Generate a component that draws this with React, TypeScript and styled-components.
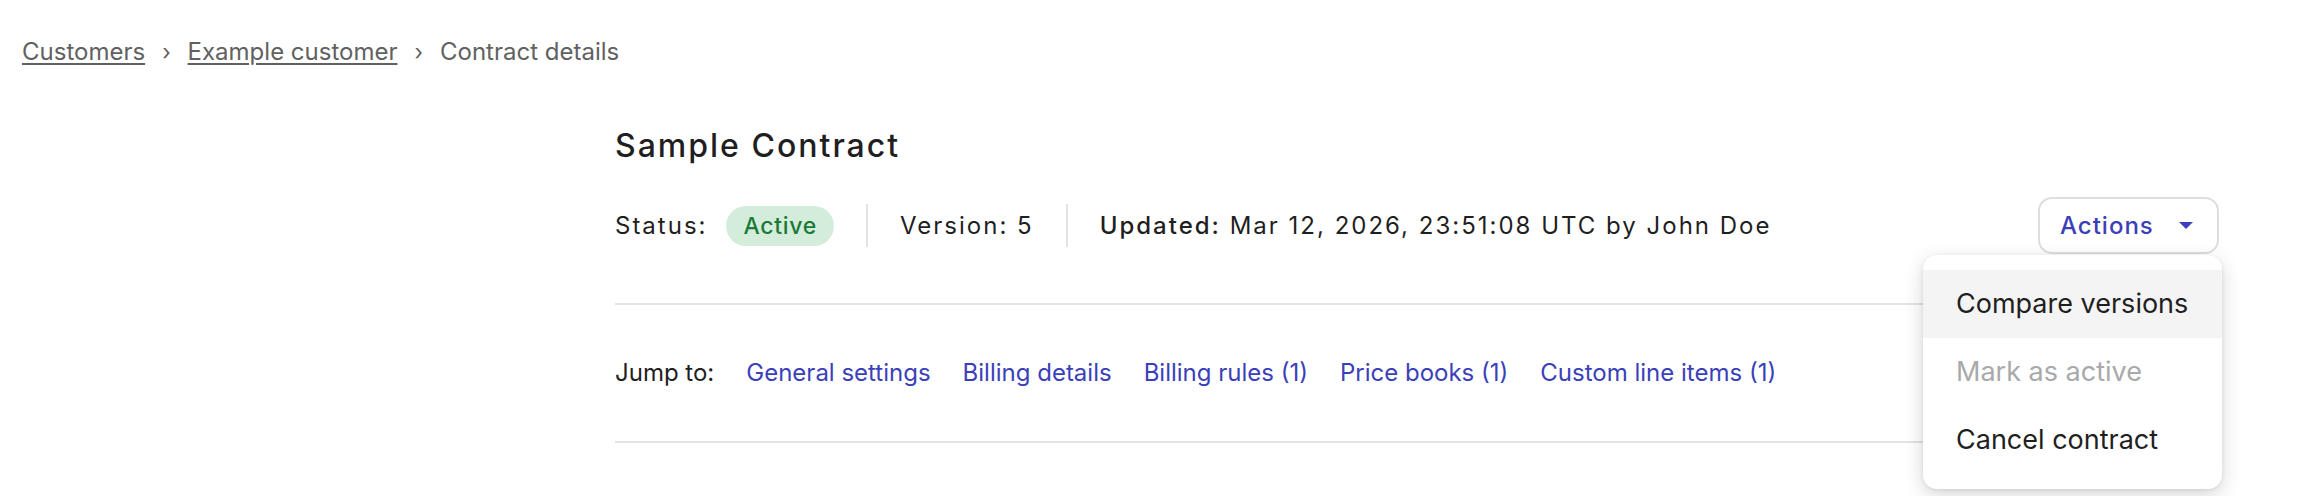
import React from 'react';
import styled, {createGlobalStyle} from 'styled-components';

const GlobalStyle = createGlobalStyle`
    body {
        margin: 0;
        background: #ffffff;
        font-family: Inter, "Noto Sans", sans-serif;
        color: #1f1f1f;
    }
`;

const Page = styled.div`
    width: 2298px;
    height: 496px;
    overflow: hidden;
    position: relative;
`;

const Breadcrumbs = styled.nav`
    display: flex;
    align-items: center;
    gap: 17px;
    padding: 34px 0 0 22px;
    font-size: 24px;
    line-height: 36px;
    color: #616161;
`;

const Crumb = styled.a`
    color: #616161;
    text-decoration: underline;
    text-underline-offset: 3px;
    text-decoration-thickness: 2px;
`;

const CrumbSep = styled.span`
    font-size: 22px;
    color: #616161;
`;

const Main = styled.main`
    margin-left: 615px;
    width: 1604px;
`;

const Title = styled.h1`
    margin: 56px 0 0;
    font-size: 32px;
    line-height: 40px;
    font-weight: 500;
    letter-spacing: 2px;
    color: #1f1f1f;
`;

const StatusRow = styled.div`
    display: flex;
    align-items: center;
    height: 57px;
    margin-top: 31px;
    font-size: 24px;
    line-height: 36px;
    letter-spacing: 2px;
`;

const Field = styled.div`
    display: flex;
    align-items: center;
    gap: 19px;
`;

const Label = styled.span<{$strong?: boolean}>`
    font-weight: ${p => (p.$strong ? 500 : 400)};
`;

const Badge = styled.span`
    display: inline-flex;
    align-items: center;
    height: 40px;
    padding: 0 17px;
    border-radius: 20px;
    background: #d4eddb;
    color: #1b7a38;
    font-size: 23px;
    font-weight: 500;
    letter-spacing: 0.7px;
`;

const VSep = styled.div`
    width: 2px;
    height: 43px;
    background: #e3e3e3;
    margin: 0 32px;
`;

const Spacer = styled.div`
    flex: 1;
`;

const ActionsWrap = styled.div`
    position: relative;
    letter-spacing: normal;
`;

const ActionsButton = styled.button`
    display: flex;
    align-items: center;
    height: 57px;
    width: 181px;
    box-sizing: border-box;
    padding: 0 24px 0 20px;
    border: 2px solid #dedede;
    border-radius: 14px;
    background: #ffffff;
    color: #3b3fb9;
    font-family: inherit;
    font-size: 24px;
    font-weight: 500;
    letter-spacing: 1px;
    cursor: pointer;
`;

const ButtonText = styled.span`
    flex: 1;
    text-align: left;
`;

const Menu = styled.ul`
    position: absolute;
    top: 58px;
    right: -3px;
    width: 299px;
    margin: 0;
    padding: 15px 0;
    list-style: none;
    background: #ffffff;
    border-radius: 14px;
    box-shadow: 0 6px 20px rgba(0, 0, 0, 0.16), 0 1px 4px rgba(0, 0, 0, 0.08);
    z-index: 10;
`;

const MenuItem = styled.li<{$active?: boolean; $disabled?: boolean}>`
    display: flex;
    align-items: center;
    height: 68px;
    padding-left: 33px;
    font-size: 27px;
    color: ${p => (p.$disabled ? '#a9a9a9' : '#1f1f1f')};
    background: ${p => (p.$active ? '#f4f4f4' : 'transparent')};
    white-space: nowrap;
`;

const Divider = styled.hr`
    margin: 0;
    border: none;
    height: 2px;
    background: #e3e3e3;
`;

const StatusDivider = styled(Divider)`
    margin-top: 49px;
`;

const JumpRow = styled.div`
    display: flex;
    align-items: center;
    gap: 32px;
    padding: 50px 0;
    font-size: 24px;
    line-height: 36px;
`;

const JumpLabel = styled.span`
    color: #1f1f1f;
`;

const JumpLink = styled.a`
    color: #3b3fb9;
    text-decoration: none;
`;

const jumpLinks = [
    'General settings',
    'Billing details',
    'Billing rules (1)',
    'Price books (1)',
    'Custom line items (1)'
];

const Caret = () => (
    <svg width="14" height="8" viewBox="0 0 14 8">
        <path d="M0 0 L14 0 L7 7 Z" fill="#3b3fb9" />
    </svg>
);

export default function App() {
    return (
        <Page>
            <GlobalStyle />
            <Breadcrumbs>
                <Crumb>Customers</Crumb>
                <CrumbSep>›</CrumbSep>
                <Crumb>Example customer</Crumb>
                <CrumbSep>›</CrumbSep>
                <span>Contract details</span>
            </Breadcrumbs>
            <Main>
                <Title>Sample Contract</Title>
                <StatusRow>
                    <Field>
                        <Label>Status:</Label>
                        <Badge>Active</Badge>
                    </Field>
                    <VSep />
                    <Field>
                        <span>Version: 5</span>
                    </Field>
                    <VSep />
                    <Field>
                        <span>
                            <Label $strong>Updated:</Label> Mar 12, 2026, 23:51:08 UTC by John Doe
                        </span>
                    </Field>
                    <Spacer />
                    <ActionsWrap>
                        <ActionsButton>
                            <ButtonText>Actions</ButtonText>
                            <Caret />
                        </ActionsButton>
                        <Menu>
                            <MenuItem $active>Compare versions</MenuItem>
                            <MenuItem $disabled>Mark as active</MenuItem>
                            <MenuItem>Cancel contract</MenuItem>
                        </Menu>
                    </ActionsWrap>
                </StatusRow>
                <StatusDivider />
                <JumpRow>
                    <JumpLabel>Jump to:</JumpLabel>
                    {jumpLinks.map(link => (
                        <JumpLink key={link}>{link}</JumpLink>
                    ))}
                </JumpRow>
                <Divider />
            </Main>
        </Page>
    );
}
